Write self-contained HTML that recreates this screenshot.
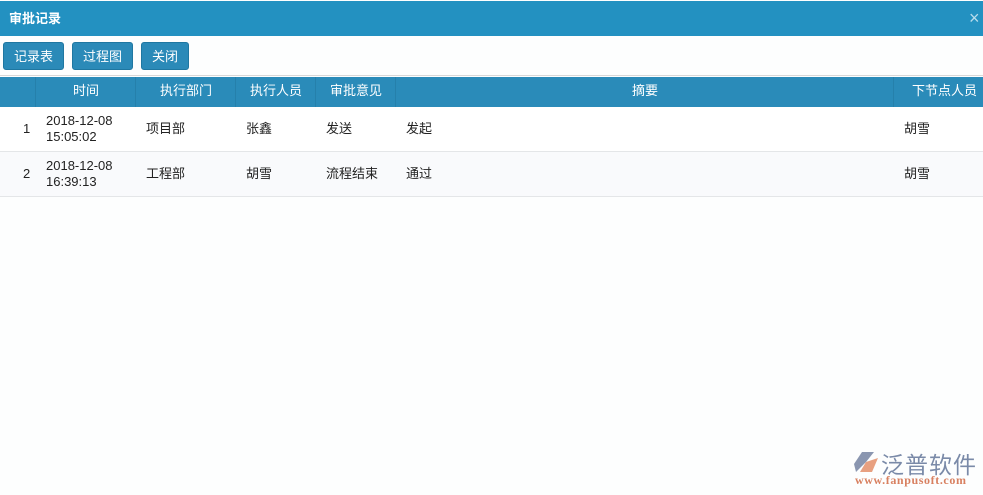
<!DOCTYPE html>
<html><head><meta charset="utf-8"><style>
body{margin:0;width:983px;height:495px;background:#fdfefe;font-family:"Liberation Sans","Noto Sans CJK SC",sans-serif;font-size:13px;color:#222;position:relative;overflow:hidden}
.top{position:absolute;left:0;top:1px;width:983px;height:35px;background:#2391c1;color:#fff;font-weight:bold;font-size:13px;line-height:35px;padding-left:9px;box-sizing:border-box}
.x{position:absolute;right:0;top:0;color:#b8dcec;font-size:18px;font-weight:normal;width:14px}
.btn{position:absolute;top:42px;height:28px;line-height:27px;background:#2b8ab8;border:1px solid #1f77a1;border-radius:3px;color:#fff;text-align:center;box-sizing:border-box}
.line{position:absolute;left:0;top:75px;width:983px;height:1px;background:#d8d8d8}
.hd{position:absolute;left:0;top:77px;width:983px;height:30px;background:#2a8bb9;color:#fff}
.hd div{position:absolute;top:0;height:30px;line-height:28px;text-align:center;border-left:1px solid #2580ab}
.row{position:absolute;left:0;width:983px;height:44px;border-bottom:1px solid #e4e6e8}
.row div{position:absolute;top:0;height:44px;display:flex;align-items:center;line-height:16px}
</style></head><body>
<div class="top">审批记录<span class="x">×</span></div>
<div class="btn" style="left:3px;width:61px">记录表</div>
<div class="btn" style="left:72px;width:61px">过程图</div>
<div class="btn" style="left:141px;width:48px">关闭</div>
<div class="line"></div>
<div class="hd">
<div style="left:0;width:35px;border:0"></div>
<div style="left:35px;width:100px">时间</div>
<div style="left:135px;width:100px">执行部门</div>
<div style="left:235px;width:80px">执行人员</div>
<div style="left:315px;width:80px">审批意见</div>
<div style="left:395px;width:498px">摘要</div>
<div style="left:893px;width:90px;text-align:right;padding-right:6px;box-sizing:border-box">下节点人员</div>
</div>
<div class="row" style="top:107px;background:#fff">
<div style="left:23px">1</div><div style="left:46px">2018-12-08<br>15:05:02</div><div style="left:146px">项目部</div><div style="left:246px">张鑫</div><div style="left:326px">发送</div><div style="left:406px">发起</div><div style="left:904px">胡雪</div>
</div>
<div class="row" style="top:152px;background:#f9fafc">
<div style="left:23px">2</div><div style="left:46px">2018-12-08<br>16:39:13</div><div style="left:146px">工程部</div><div style="left:246px">胡雪</div><div style="left:326px">流程结束</div><div style="left:406px">通过</div><div style="left:904px">胡雪</div>
</div>
<svg style="position:absolute;left:852px;top:450px" width="28" height="24"><path d="M10 2 L22 2 L14 12 L4 22 L2 14 Z" fill="#8a96b0"/><path d="M14 12 L26 8 L20 22 L8 22 Z" fill="#e8a080"/></svg>
<div style="position:absolute;left:881px;top:446px;font-size:23px;color:#7a8aa8;letter-spacing:1px">泛普软件</div>
<div style="position:absolute;left:855px;top:473px;font-size:12px;font-weight:bold;color:#d88060;font-family:'Liberation Serif',serif;letter-spacing:0.6px">www.fanpusoft.com</div>
</body></html>
